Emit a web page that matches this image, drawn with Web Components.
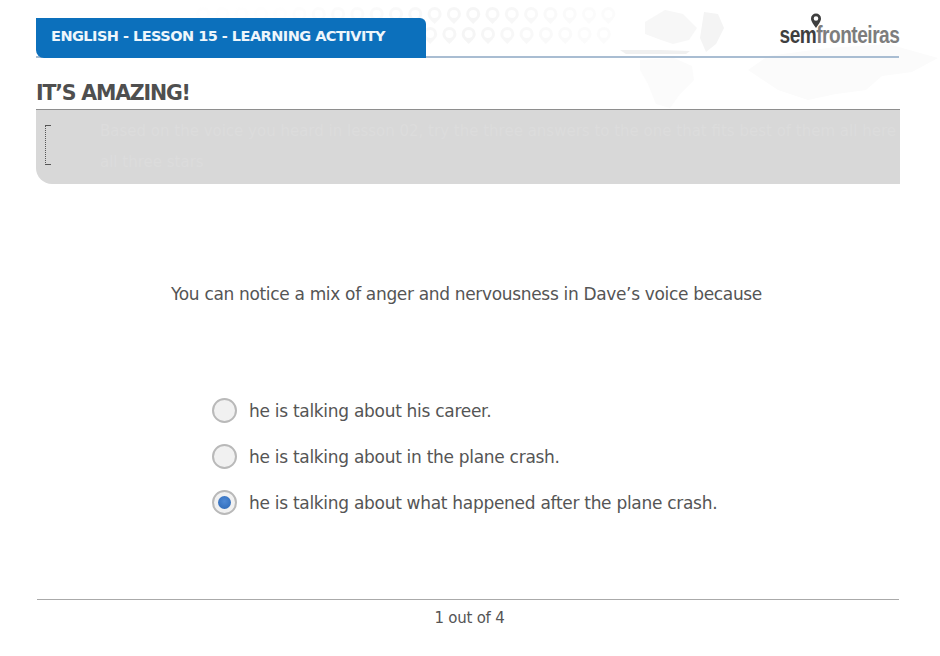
<!DOCTYPE html>
<html>
<head>
<meta charset="utf-8">
<title>It's amazing</title>
<style>
  html, body { margin: 0; background: #fff; }
  body { font-family: "DejaVu Sans", sans-serif; color: #555; }
</style>
</head>
<body>
<activity-page>
  <lesson-header title-text="ENGLISH - LESSON 15 - LEARNING ACTIVITY"></lesson-header>
  <section-title>IT’S AMAZING!</section-title>
  <instruction-panel>Based on the voice you heard in lesson 02, try the three answers to the one that fits best of them all here<br>all three stars</instruction-panel>
  <quiz-question text="You can notice a mix of anger and nervousness in Dave’s voice because">
    <quiz-option>he is talking about his career.</quiz-option>
    <quiz-option>he is talking about in the plane crash.</quiz-option>
    <quiz-option checked>he is talking about what happened after the plane crash.</quiz-option>
  </quiz-question>
  <page-counter>1 out of 4</page-counter>
</activity-page>

<script>
const uiFont = '"DejaVu Sans", sans-serif';

class ActivityPage extends HTMLElement {
    constructor() {
        super();
        // watermark pins, two rows that fade out at both ends
        let pins = '';
        for (let row = 0; row < 2; row++) {
            for (let i = 0; i < 22; i++) {
                const x = 203 + i * 19.3 - row * 4.5;
                const y = 14 + row * 20;
                const o = Math.max(0.1, 0.8 - Math.abs(i - 14) / 14);
                pins += `<path transform="translate(${x} ${y})" opacity="${o.toFixed(2)}" d="M0 10C-5 5-7 3-7 0a7 7 0 0 1 14 0c0 3-2 5-7 10zM0-4a4 4 0 1 0 0 8a4 4 0 0 0 0-8z" fill="#f3f3f3" fill-rule="evenodd"/>`;
            }
        }
        this.attachShadow({mode: 'open'}).innerHTML = `
          <style>
            :host { display: block; position: relative; width: 940px; height: 656px; overflow: hidden; }
            svg { position: absolute; left: 0; top: 0; }
            main { position: relative; display: flex; flex-direction: column; padding: 18px 41px 0 36px; height: 100%; box-sizing: border-box; }
          </style>
          <svg width="940" height="120" viewBox="0 0 940 120">
            ${pins}
            <g fill="#f7f7f7">
              <path d="M645 22l20-12 18 4 14 14-8 12-16 4-12-4-16-6z"/>
              <path d="M704 12l14 2 6 14-8 16-10 8-6-14z" fill="#f4f4f4"/>
              <path d="M620 50l40 0 30 1 -4 3-60 0z" fill="#f0f0f0"/>
            </g>
            <g fill="#fbfbfb">
              <path d="M640 60l34-2 18 8 2 14-14 14-10 14-14-4-8-20-8-14z"/>
              <path d="M748 70l20-14 60-8 60-4 50 14-26 14-30 4-16 14-30 4-28 6-30-10z"/>
            </g>
          </svg>
          <main><slot></slot></main>
        `;
    }
}

class LessonHeader extends HTMLElement {
    connectedCallback() {
        if (this.shadowRoot) return;
        this.attachShadow({mode: 'open'}).innerHTML = `
          <style>
            :host { display: block; }
            .bar { display: flex; justify-content: space-between; align-items: flex-end; height: 40px; position: relative; }
            .bar::after { content: ''; position: absolute; left: 0; right: 0; bottom: 0; height: 2px; background: #a9bdd2; }
            .tab { position: relative; z-index: 1; box-sizing: border-box; width: 390px; height: 40px; padding-left: 15px; background: #0c70bc; color: #eef6fb; font: bold 14.5px/37px ${uiFont}; letter-spacing: -0.53px; border-radius: 0 6px 0 8px; white-space: nowrap; }
            .logo { width: 120px; height: 40px; position: relative; }
            .word { position: absolute; right: 0; top: 4px; font: bold 23px/26px "Liberation Sans", sans-serif; letter-spacing: -0.6px; color: #3f3f3f; white-space: nowrap; transform-origin: right; transform: scaleX(.83); }
            .word b { color: #7d7d7d; }
            .logo svg { position: absolute; left: 31px; top: -5px; }
          </style>
          <div class="bar">
            <div class="tab">${this.getAttribute('title-text')}</div>
            <div class="logo">
              <svg width="12" height="16" viewBox="0 0 12 16"><path fill-rule="evenodd" fill="#3f3f3f" d="M6 15C2.500 10 1 8 1 5.500a5 5 0 0 1 10 0C11 8 9.500 10 6 15zM6 3.200a2.300 2.300 0 1 0 0 4.600a2.300 2.300 0 0 0 0-4.600z"/></svg>
              <span class="word">sem<b>fronteiras</b></span>
            </div>
          </div>
        `;
    }
}

class SectionTitle extends HTMLElement {
    constructor() {
        super();
        this.attachShadow({mode: 'open'}).innerHTML = `
          <style>
            :host { display: block; margin-top: 20px; margin-right: -1px; height: 31px; font: bold 20.5px/31px ${uiFont}; letter-spacing: -1.2px; color: #4f4f4f; border-bottom: 1px solid #8e8e8e; }
          </style>
          <slot></slot>
        `;
    }
}

class InstructionPanel extends HTMLElement {
    constructor() {
        super();
        this.attachShadow({mode: 'open'}).innerHTML = `
          <style>
            :host { display: block; box-sizing: border-box; height: 74px; margin-right: -1px; padding: 6px 16px 0 64px; background: #d8d8d8; border-radius: 0 0 0 16px; position: relative; color: #dcdcdc; font: 15px/31px ${uiFont}; white-space: nowrap; overflow: hidden; }
            .mark { position: absolute; left: 9px; top: 15px; width: 5px; height: 38px; border: 1px dotted #555; border-right: 0; }
            .mark::before, .mark::after { content: ''; position: absolute; left: -1px; width: 6px; height: 1px; background: #555; }
            .mark::before { top: -1px; }
            .mark::after { bottom: -1px; }
          </style>
          <div class="mark"></div>
          <slot></slot>
        `;
    }
}

class QuizQuestion extends HTMLElement {
    connectedCallback() {
        if (this.shadowRoot) return;
        this.attachShadow({mode: 'open'}).innerHTML = `
          <style>
            :host { display: block; font: 17px/24px ${uiFont}; letter-spacing: -0.33px; color: #555; }
            p { margin: 98px 0 0; text-align: center; padding-right: 2px; }
            .options { display: flex; flex-direction: column; gap: 16px; margin: 90px 0 0 176px; }
          </style>
          <p>${this.getAttribute('text')}</p>
          <div class="options"><slot></slot></div>
        `;
    }
}

class QuizOption extends HTMLElement {
    constructor() {
        super();
        this.attachShadow({mode: 'open'}).innerHTML = `
          <style>
            :host { display: flex; align-items: center; gap: 12px; height: 30px; font: 17px/30px ${uiFont}; letter-spacing: -0.29px; color: #555; }
            .dot { flex: none; box-sizing: border-box; width: 25px; height: 25px; margin-bottom: 2px; border-radius: 50%; border: 2.500px solid #b9b9b9; background: #f1f1f1; display: flex; align-items: center; justify-content: center; }
            :host([checked]) .dot::after { content: ''; width: 13px; height: 13px; border-radius: 50%; background: radial-gradient(circle at 50% 40%, #4f8ad6, #2a66b4); }
          </style>
          <span class="dot"></span><span><slot></slot></span>
        `;
    }
}

class PageCounter extends HTMLElement {
    constructor() {
        super();
        this.attachShadow({mode: 'open'}).innerHTML = `
          <style>
            :host { display: block; margin-top: 81px; margin-left: 1px; padding: 6px 0 0 3px; text-align: center; border-top: 1px solid #aaa; font: 15px/24px ${uiFont}; letter-spacing: -0.25px; color: #555; }
          </style>
          <slot></slot>
        `;
    }
}

customElements.define('activity-page', ActivityPage);
customElements.define('lesson-header', LessonHeader);
customElements.define('section-title', SectionTitle);
customElements.define('instruction-panel', InstructionPanel);
customElements.define('quiz-question', QuizQuestion);
customElements.define('quiz-option', QuizOption);
customElements.define('page-counter', PageCounter);
</script>
</body>
</html>
